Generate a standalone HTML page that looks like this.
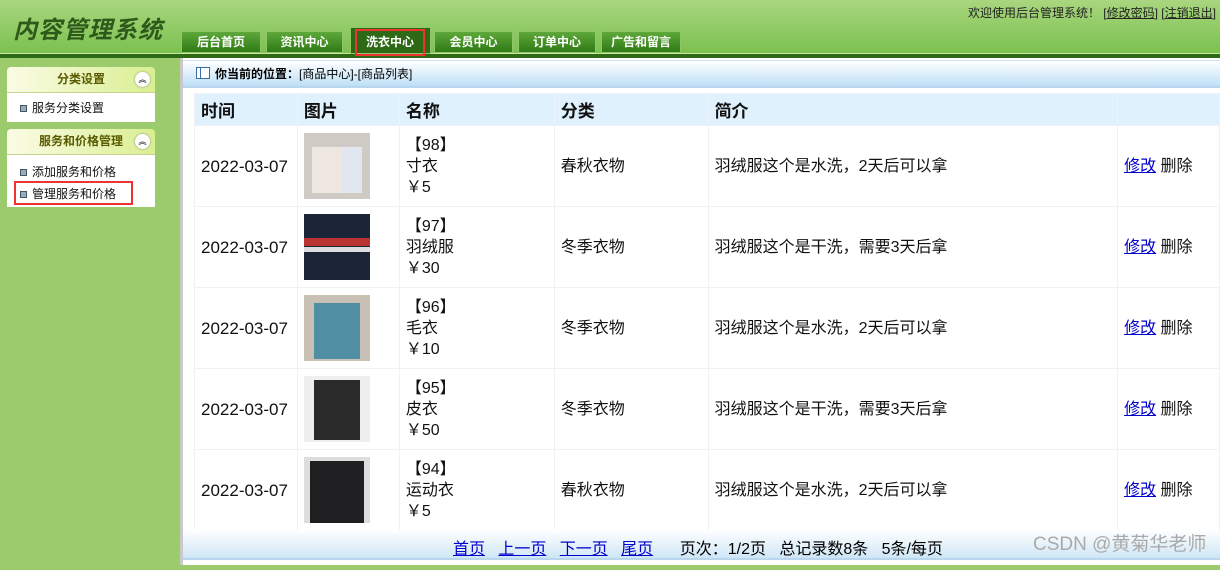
<!DOCTYPE html>
<html><head><meta charset="utf-8"><style>
*{margin:0;padding:0;box-sizing:border-box}
body{width:1220px;height:565px;overflow:hidden;font-family:"Liberation Sans","Noto Sans CJK SC",sans-serif;font-size:12px;background:#9bcb6c;position:relative}
.hdr{position:absolute;left:0;top:0;width:1220px;height:53px;background:linear-gradient(#a9d67f,#7cc14f)}
.line{position:absolute;left:0;top:53px;width:1220px;height:5px;background:#2e6a16;border-top:1px solid #c6e8a0}
.logo{position:absolute;left:13px;top:10px;font-size:24px;font-style:italic;font-weight:bold;color:#2d5a1a;letter-spacing:1px}
.tab{position:absolute;top:31px;height:22px;background:linear-gradient(#5ea83a,#2f7a16);border:1px solid #8fc66a;color:#fff;font-weight:bold;font-size:12px;text-align:center;line-height:20px}
.tab.act{top:27px;height:27px;background:#2e6a16;line-height:28px}
.welcome{position:absolute;right:4px;top:4px;font-size:12px;color:#222}
.welcome u{color:#222}
.side{position:absolute;left:180px;top:58px;width:3px;height:507px;background:#c9c9c9}
.main{position:absolute;left:183px;top:58px;width:1037px;height:507px;background:#fff}
.ph{position:absolute;left:7px;width:148px;height:26px;background:linear-gradient(90deg,#fbfbe6,#d9ef91);border-bottom:1px solid #c9d28f;border-radius:4px 4px 0 0;color:#5a5a00;font-weight:bold;text-align:center;line-height:25px;font-size:12px}
.ph i{position:absolute;right:5px;top:5px;width:15px;height:15px;border-radius:50%;background:#fff;box-shadow:0 0 2px #888;font-style:normal;font-size:8px;line-height:15px;color:#333}
.pb{position:absolute;left:7px;width:148px;background:#fff}
.pb div{height:22px;line-height:22px;padding-left:25px;position:relative;color:#111}
.pb div:before{content:"";position:absolute;left:13px;top:8px;width:5px;height:5px;background:#9ab;border:1px solid #456}
.bc{position:absolute;left:183px;top:60px;width:1037px;height:28px;background:linear-gradient(#fff,#bde0f7);border-top:1px solid #d0e5f4;border-bottom:2px solid #b8d6ee;line-height:27px;padding-left:32px;font-size:12px}
.bc b{font-weight:bold}
table{position:absolute;left:194px;top:93px;border-collapse:collapse;font-size:16px}
td,th{border:1px solid #eef2f6;vertical-align:middle;text-align:left;padding-left:6px;color:#111}
th{height:32px;background:#dff1fd;font-weight:bold;font-size:17px}
td{height:81px;background:#fff;line-height:21px}
td.d{font-size:17px}
.img{width:66px;height:66px;display:block}
a{color:#00c;text-decoration:underline}
.foot{position:absolute;left:183px;top:530px;width:1037px;height:30px;background:linear-gradient(#fff,#cfe6f6);border-bottom:2px solid #b8d6ee;font-size:16px;line-height:40px}
</style></head><body>
<div class="hdr"></div><div class="line"></div>
<div class="logo">内容管理系统</div>
<div class="tab" style="left:181px;width:80px">后台首页</div>
<div class="tab" style="left:266px;width:77px">资讯中心</div>
<div class="tab act" style="left:350px;width:81px"><span style="position:absolute;left:4px;top:1px;width:70px;height:27px;border:2px solid #e33;line-height:23px">洗衣中心</span></div>
<div class="tab" style="left:434px;width:79px">会员中心</div>
<div class="tab" style="left:518px;width:78px">订单中心</div>
<div class="tab" style="left:601px;width:80px">广告和留言</div>
<div class="welcome">欢迎使用后台管理系统！ [<u>修改密码</u>] [<u>注销退出</u>]</div>
<div class="side"></div><div class="main"></div>
<div class="ph" style="top:67px">分类设置<i>︽</i></div>
<div class="pb" style="top:93px;height:29px;padding-top:4px"><div>服务分类设置</div></div>
<div class="ph" style="top:129px">服务和价格管理<i>︽</i></div>
<div class="pb" style="top:155px;height:52px;padding-top:6px"><div>添加服务和价格</div><div>管理服务和价格</div></div>
<div style="position:absolute;left:14px;top:181px;width:119px;height:24px;border:2px solid #e33"></div>
<div class="bc"><span style="position:absolute;left:13px;top:6px;width:14px;height:12px;border:1px solid #3a6ea5;background:#fff"><span style="position:absolute;left:3px;top:0;width:1px;height:10px;background:#3a6ea5"></span></span><b>你当前的位置：</b>[商品中心]-[商品列表]</div>
<table>
<tr><th style="width:103px">时间</th><th style="width:102px">图片</th><th style="width:155px">名称</th><th style="width:154px">分类</th><th style="width:410px">简介</th><th style="width:102px"></th></tr>
<tr><td class="d">2022-03-07</td><td><svg class="img"><rect width="66" height="66" fill="#cfcac3"/><rect x="8" y="14" width="50" height="46" fill="#eee7e0"/><rect x="38" y="14" width="20" height="46" fill="#e2e6ee"/></svg></td><td>【98】<br>寸衣<br>￥5</td><td>春秋衣物</td><td>羽绒服这个是水洗，2天后可以拿</td><td><a>修改</a> 删除</td></tr>
<tr><td class="d">2022-03-07</td><td><svg class="img"><rect width="66" height="66" fill="#1c2438"/><rect x="0" y="24" width="66" height="8" fill="#b33"/><rect x="0" y="33" width="66" height="5" fill="#ddd"/></svg></td><td>【97】<br>羽绒服<br>￥30</td><td>冬季衣物</td><td>羽绒服这个是干洗，需要3天后拿</td><td><a>修改</a> 删除</td></tr>
<tr><td class="d">2022-03-07</td><td><svg class="img"><rect width="66" height="66" fill="#c8c0b4"/><rect x="10" y="8" width="46" height="56" fill="#4f8ea3"/></svg></td><td>【96】<br>毛衣<br>￥10</td><td>冬季衣物</td><td>羽绒服这个是水洗，2天后可以拿</td><td><a>修改</a> 删除</td></tr>
<tr><td class="d">2022-03-07</td><td><svg class="img"><rect width="66" height="66" fill="#eee"/><rect x="10" y="4" width="46" height="60" fill="#2a2a2a"/></svg></td><td>【95】<br>皮衣<br>￥50</td><td>冬季衣物</td><td>羽绒服这个是干洗，需要3天后拿</td><td><a>修改</a> 删除</td></tr>
<tr><td class="d">2022-03-07</td><td><svg class="img"><rect width="66" height="66" fill="#ddd"/><rect x="6" y="4" width="54" height="62" fill="#1f1f22"/></svg></td><td>【94】<br>运动衣<br>￥5</td><td>春秋衣物</td><td>羽绒服这个是水洗，2天后可以拿</td><td><a>修改</a> 删除</td></tr>
</table>
<div class="foot"><span style="position:absolute;left:270px;top:0;line-height:40px"><a>首页</a>&nbsp;&nbsp; <a>上一页</a>&nbsp;&nbsp; <a>下一页</a>&nbsp;&nbsp; <a>尾页</a>&nbsp;&nbsp;&nbsp;&nbsp;&nbsp; 页次：1/2页&nbsp;&nbsp; 总记录数8条&nbsp;&nbsp; 5条/每页</span><span style="position:absolute;left:850px;top:0;line-height:30px;color:#aaa;font-size:19px">CSDN @黄菊华老师</span></div>
</body></html>
